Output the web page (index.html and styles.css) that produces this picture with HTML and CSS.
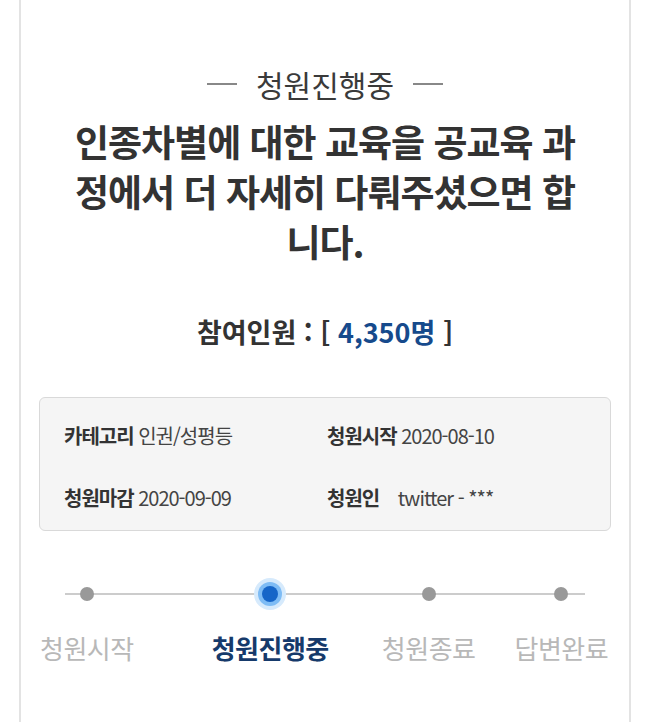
FILE: index.html
```html
<!DOCTYPE html>
<html lang="ko">
<head>
    <meta charset="UTF-8">
    <meta name="viewport" content="width=device-width, initial-scale=1.0">
    <title>청원진행중</title>
    <link rel="stylesheet" href="styles.css">
</head>
<body>
    <div class="petition-card">
        <div class="status-label">
            <span class="dash"></span>
            <span>청원진행중</span>
            <span class="dash"></span>
        </div>

        <h1 class="petition-title">인종차별에 대한 교육을 공교육 과정에서 더 자세히 다뤄주셨으면 합니다.</h1>

        <div class="participants">
            참여인원 : [ <span class="count">4,350명</span> ]
        </div>

        <div class="info-box">
            <div class="info-item"><span class="info-label">카테고리</span> 인권/성평등</div>
            <div class="info-item"><span class="info-label">청원시작</span> 2020-08-10</div>
            <div class="info-item"><span class="info-label">청원마감</span> 2020-09-09</div>
            <div class="info-item"><span class="info-label">청원인</span> <span class="author">twitter - ***</span></div>
        </div>

        <div class="progress">
            <div class="step step-start">
                <span class="dot"></span>
                <span class="step-name">청원시작</span>
            </div>
            <div class="step step-ongoing active">
                <span class="dot"></span>
                <span class="step-name">청원진행중</span>
            </div>
            <div class="step step-closed">
                <span class="dot"></span>
                <span class="step-name">청원종료</span>
            </div>
            <div class="step step-answered">
                <span class="dot"></span>
                <span class="step-name">답변완료</span>
            </div>
        </div>
    </div>
</body>
</html>
```

FILE: styles.css
```css
body {
    margin: 0;
    padding: 0;
    background-color: #fff;
    font-family: "Noto Sans CJK KR", "Noto Sans", sans-serif;
    color: #333;
}
.petition-card {
    margin: 0 16px 0 19px;
    min-height: 722px;
    border-left: 2px solid #e3e3e3;
    border-right: 2px solid #e3e3e3;
    padding: 66px 18px 0 18px;
    box-sizing: border-box;
}
.status-label {
    display: flex;
    justify-content: center;
    align-items: center;
    gap: 19px;
    font-size: 30px;
    color: #3a3a3a;
    line-height: 36px;
}
.status-label .dash {
    width: 30px;
    height: 2px;
    background-color: #888;
}
.petition-title {
    margin: 14px 26px 0 26px;
    font-size: 37px;
    font-weight: bold;
    line-height: 50px;
    text-align: center;
    color: #333;
    letter-spacing: -1px;
}
.participants {
    margin-top: 48px;
    text-align: center;
    font-size: 27px;
    font-weight: bold;
    color: #333;
    line-height: 36px;
}
.participants .count {
    color: #164a8c;
}
.info-box {
    margin-top: 47px;
    background-color: #f5f5f5;
    border: 1px solid #d9d9d9;
    border-radius: 6px;
    padding: 24px 24px 18px 24px;
    display: grid;
    grid-template-columns: 263px 1fr;
    row-gap: 34px;
    font-size: 20px;
    line-height: 28px;
    color: #444;
    letter-spacing: -1px;
}
.info-label {
    font-weight: bold;
    color: #333;
}
.author {
    margin-left: 14px;
}
.progress {
    position: relative;
    display: flex;
    margin-top: 49px;
}
.progress::before {
    content: "";
    position: absolute;
    left: 26px;
    right: 26px;
    top: 13px;
    height: 2px;
    background-color: #ccc;
}
.step {
    position: relative;
    display: flex;
    flex-direction: column;
    align-items: center;
}
.step-start {
    margin-left: 1px;
}
.step-ongoing {
    margin-left: 78px;
}
.step-closed {
    margin-left: 53px;
}
.step-answered {
    margin-left: 39px;
}
.dot {
    width: 14px;
    height: 14px;
    margin: 7px 0;
    border-radius: 50%;
    background-color: #999;
}
.active .dot {
    width: 16px;
    height: 16px;
    margin: 6px 0;
    background-color: #1565c8;
    box-shadow: 0 0 0 4px #7ebcf5, 0 0 0 8px #d6eafc;
}
.step-name {
    margin-top: 23px;
    font-size: 26px;
    line-height: 34px;
    color: #b8b8b8;
    letter-spacing: -0.5px;
}
.active .step-name {
    font-weight: bold;
    color: #163a6b;
}
```
